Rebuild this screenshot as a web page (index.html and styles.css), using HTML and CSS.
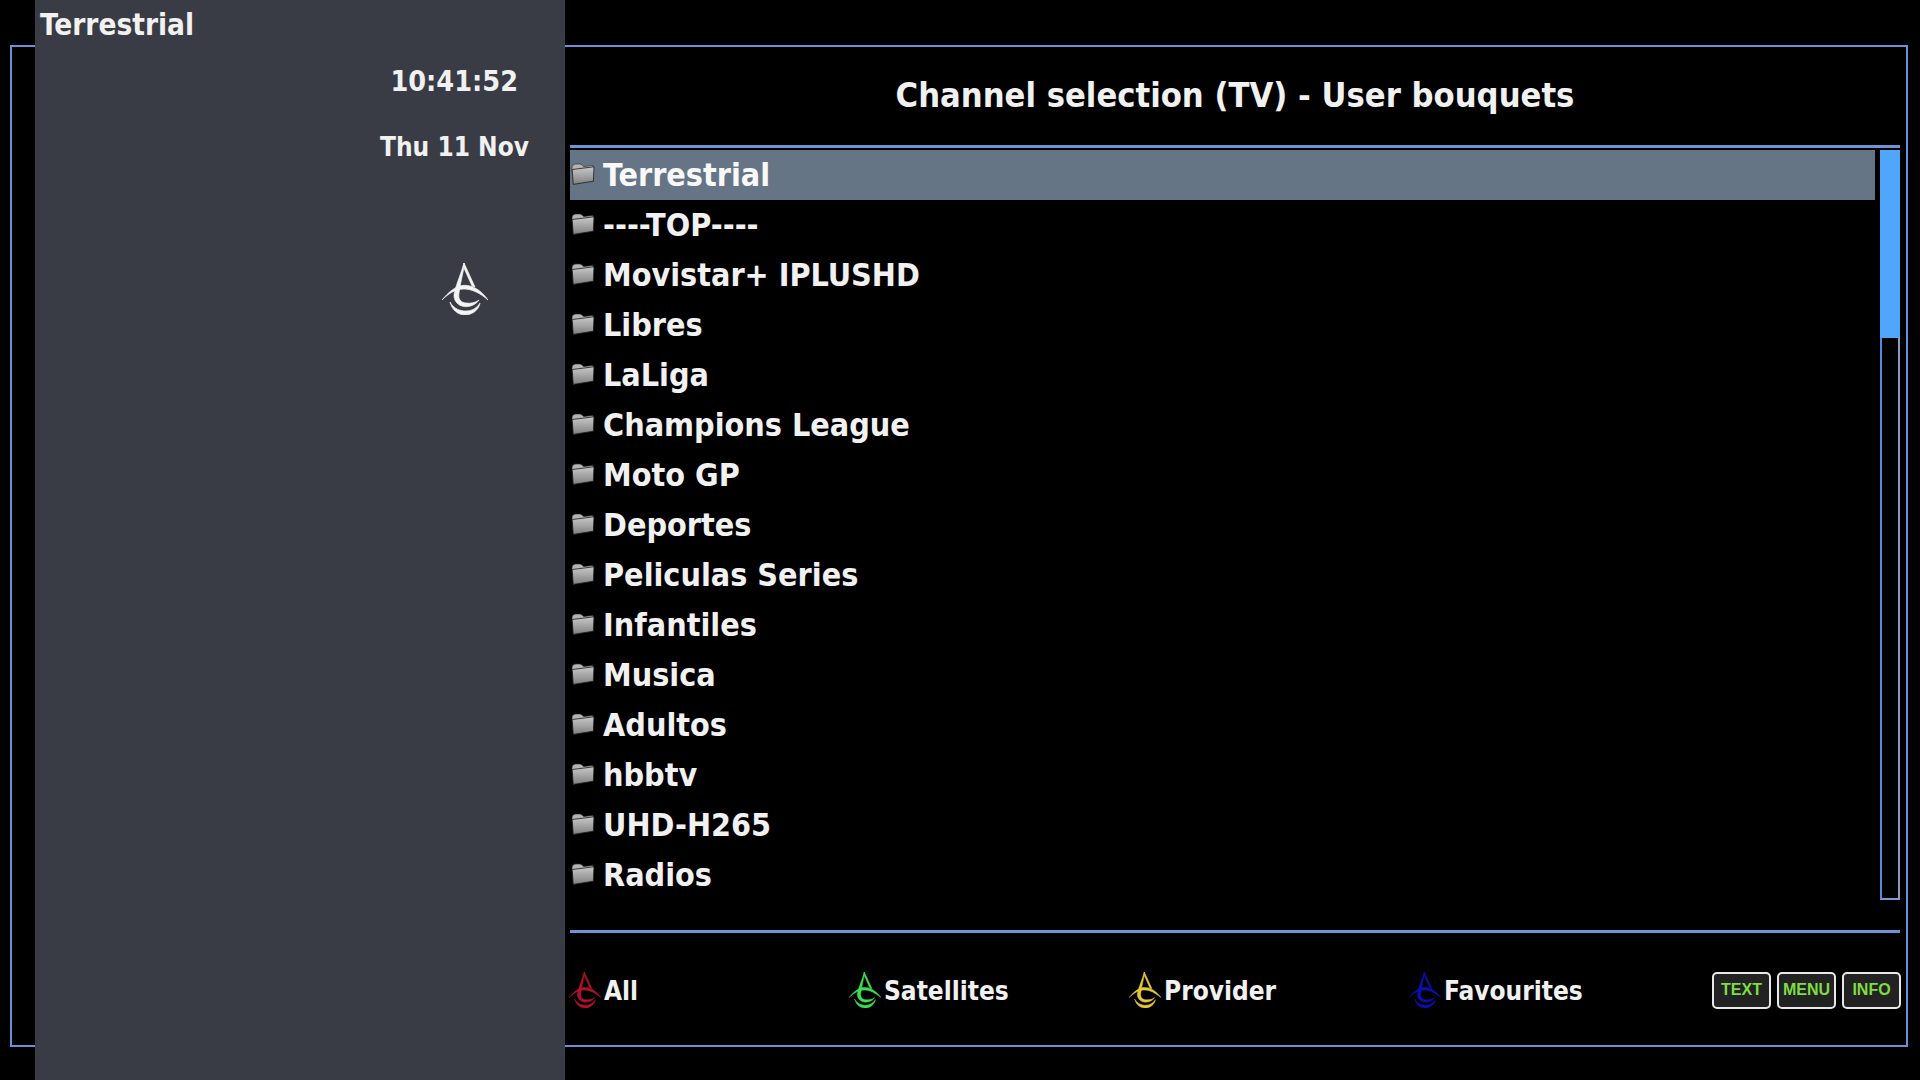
FILE: index.html
```html
<!DOCTYPE html>
<html lang="en">
<head>
<meta charset="utf-8">
<title>Channel selection</title>
<link rel="stylesheet" href="styles.css">
</head>
<body>
<svg class="defs" width="0" height="0" aria-hidden="true">
  <defs>
    <symbol id="logo" viewBox="0 0 46 52">
      <g fill="currentColor" stroke="currentColor" stroke-width="0.7">
        <path d="M22 0 L19.5 8 C16 18 12 28 12 33 C12.5 41 20 44.5 26 43.5 C31 43 35 40 37 37 C33 40 28 40.5 24 40 C18.5 39.5 16 36 17 30 C18.5 20 21 10 22 4 Z"/>
        <path d="M22 0 L33 24 L30 23 L21.5 4 Z"/>
        <path d="M0 37 C6 30 12 24 20 22.5 C30 21 40 28 46 37 C38 30 30 26 22 26 C13 26 6 31 0 37 Z"/>
        <path d="M8 39 C12 46 18 48 24 48 C30 48 35 45 38 40 C37 47 30 52 23 52 C16 52 10 47 8 39 Z"/>
      </g>
    </symbol>
    <linearGradient id="fg" x1="0" y1="0" x2="0" y2="1">
      <stop offset="0" stop-color="#c8c8c8"/>
      <stop offset="1" stop-color="#808080"/>
    </linearGradient>
    <symbol id="folder" viewBox="0 0 24 22">
      <path fill="#b4b4b4" stroke="#2a2a2a" stroke-width="0.6" d="M1 5 C1 2 3 1 5 1 L9 1 C11 1 11.5 3.5 13 3.5 L22 2.5 L22 7 L1 9 Z"/>
      <path fill="url(#fg)" stroke="#1c1c1c" stroke-width="0.8" d="M1.2 6.5 L23 3.8 L22.4 18.2 L2.2 21.4 Z"/>
    </symbol>
  </defs>
</svg>
<div class="screen">
  <div class="frame"></div>
  <aside class="side">
    <div class="side-title">Terrestrial</div>
    <div class="clock">10:41:52</div>
    <div class="date">Thu 11 Nov</div>
    <svg class="side-logo"><use href="#logo"/></svg>
  </aside>
  <main class="main">
    <h1 class="title">Channel selection (TV) - User bouquets</h1>
    <div class="rule"></div>
    <div class="listwrap">
      <ul class="list">
        <li class="row sel"><svg class="folder"><use href="#folder"/></svg>Terrestrial</li>
        <li class="row"><svg class="folder"><use href="#folder"/></svg>----TOP----</li>
        <li class="row"><svg class="folder"><use href="#folder"/></svg>Movistar+ IPLUSHD</li>
        <li class="row"><svg class="folder"><use href="#folder"/></svg>Libres</li>
        <li class="row"><svg class="folder"><use href="#folder"/></svg>LaLiga</li>
        <li class="row"><svg class="folder"><use href="#folder"/></svg>Champions League</li>
        <li class="row"><svg class="folder"><use href="#folder"/></svg>Moto GP</li>
        <li class="row"><svg class="folder"><use href="#folder"/></svg>Deportes</li>
        <li class="row"><svg class="folder"><use href="#folder"/></svg>Peliculas Series</li>
        <li class="row"><svg class="folder"><use href="#folder"/></svg>Infantiles</li>
        <li class="row"><svg class="folder"><use href="#folder"/></svg>Musica</li>
        <li class="row"><svg class="folder"><use href="#folder"/></svg>Adultos</li>
        <li class="row"><svg class="folder"><use href="#folder"/></svg>hbbtv</li>
        <li class="row"><svg class="folder"><use href="#folder"/></svg>UHD-H265</li>
        <li class="row"><svg class="folder"><use href="#folder"/></svg>Radios</li>
      </ul>
      <div class="scroll"><div class="thumb"></div></div>
    </div>
    <div class="rule rule-low"></div>
    <div class="foot">
      <div class="key"><svg class="key-logo red"><use href="#logo"/></svg>All</div>
      <div class="key"><svg class="key-logo green"><use href="#logo"/></svg>Satellites</div>
      <div class="key"><svg class="key-logo yellow"><use href="#logo"/></svg>Provider</div>
      <div class="key"><svg class="key-logo blue"><use href="#logo"/></svg>Favourites</div>
      <div class="btns">
        <span class="btn">TEXT</span><span class="btn">MENU</span><span class="btn">INFO</span>
      </div>
    </div>
  </main>
</div>
</body>
</html>
```
FILE: styles.css
```css
* { box-sizing: border-box; }
html, body { margin: 0; padding: 0; background: #000; }
body { width: 1920px; height: 1080px; overflow: hidden; font-family: "DejaVu Sans Condensed", "DejaVu Sans", sans-serif; font-stretch: condensed; font-weight: 700; color: #f1f1f1; }
.defs { position: absolute; }
.screen { position: relative; width: 1920px; height: 1080px; display: flex; padding-left: 35px; }
.frame { position: absolute; left: 10px; top: 45px; width: 1898px; height: 1002px; border: 2px solid #6b8fd8; }
.side { position: relative; width: 530px; height: 1080px; background: #393c45; flex: none; display: flex; flex-direction: column; }
.side-title { font-size: 29.5px; line-height: 32px; margin: 9px 0 0 5px; }
.clock { font-size: 28.5px; line-height: 32px; margin-top: 25px; width: 483px; text-align: right; letter-spacing: 0; }
.date { font-size: 26px; line-height: 32px; margin-top: 33px; width: 494px; text-align: right; }
.side-logo { width: 46px; height: 52px; color: #f4f4f4; margin: 100px 0 0 407px; }
.main { position: relative; flex: none; width: 1330px; margin-left: 5px; display: flex; flex-direction: column; }
.title { margin: 73px 0 0; height: 44px; font-size: 34.2px; line-height: 44px; font-weight: 700; text-align: center; width: 1330px; }
.rule { height: 3px; margin-top: 28px; background: #7092d6; }
.rule-low { margin-top: 30px; }
.listwrap { display: flex; margin-top: 2px; height: 750px; }
.list { list-style: none; margin: 0; padding: 0; width: 1305px; flex: none; }
.row { height: 50px; display: flex; align-items: center; font-size: 32px; line-height: 50px; }
.row.sel { background: #667585; color: #f8f8f8; }
.folder { width: 24px; height: 22px; margin: 0 8px 0 1px; flex: none; position: relative; top: -1px; }
.scroll { width: 20px; height: 750px; margin-left: 5px; border: 2px solid #8a9bc2; border-left-color: #5a86e0; border-bottom-color: #7b99d8; }
.thumb { height: 188px; margin: -2px; background: #4fa6fb; }
.foot { display: flex; align-items: center; height: 50px; margin-top: 33px; font-size: 26px; }
.key { width: 280px; display: flex; align-items: center; flex: none; }
.key-logo { width: 32px; height: 36px; margin: 0 3px 0 -1px; flex: none; position: relative; top: -1px; }
.red { color: #b01228; }
.green { color: #3fe04f; }
.yellow { color: #e6c83e; }
.blue { color: #0a10b0; }
.btns { display: flex; gap: 6px; margin-left: 22px; position: relative; top: -1px; }
.btn { width: 59px; height: 37px; border: 2px solid #e8e8e8; border-radius: 5px; background: #222; color: #7fdc42; font-family: "Liberation Sans", sans-serif; font-stretch: normal; font-size: 16px; display: flex; align-items: center; justify-content: center; }
```
